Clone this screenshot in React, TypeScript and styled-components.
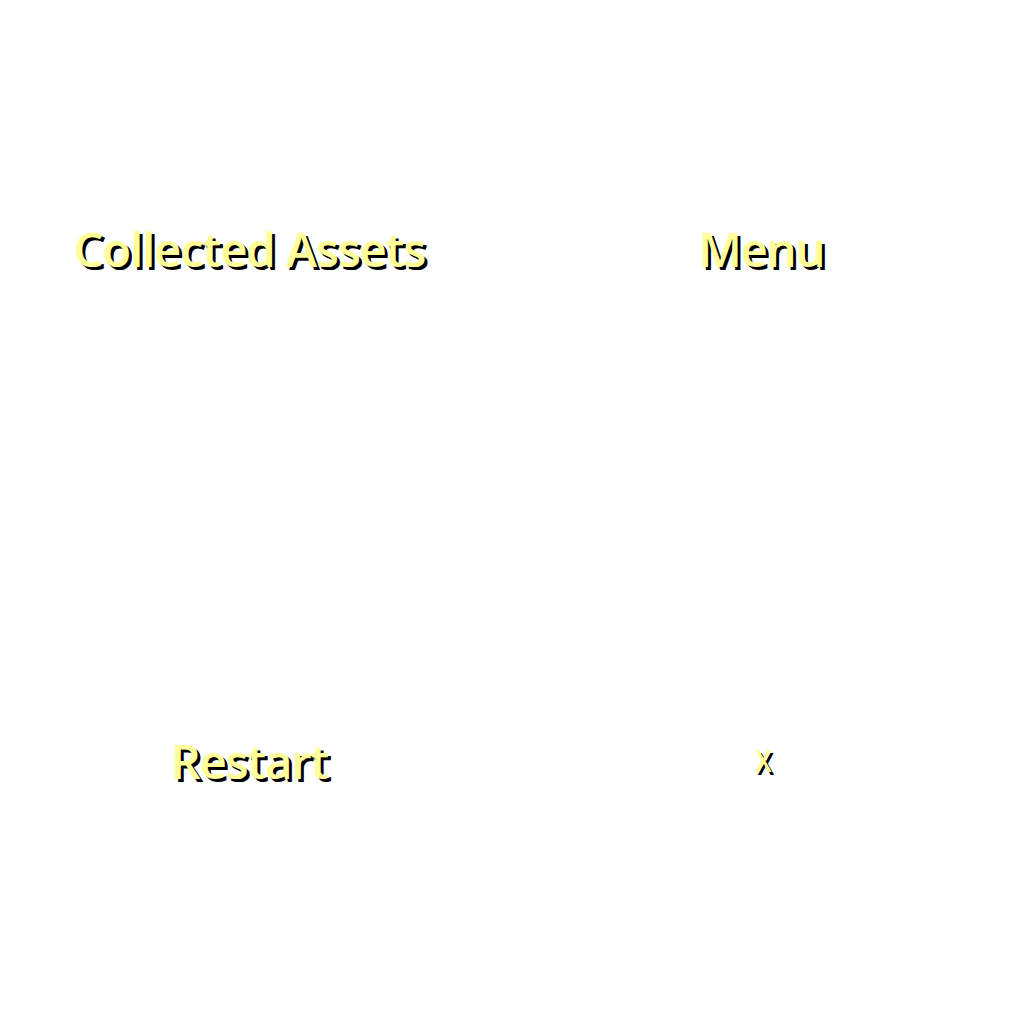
import React from "react";
import styled, { createGlobalStyle } from "styled-components";

const Global = createGlobalStyle`
  html, body { margin: 0; padding: 0; background: #fff; }
`;

const Screen = styled.div`
  width: 1024px;
  height: 1024px;
  display: grid;
  grid-template-columns: 1fr 1fr;
  grid-template-rows: 1fr 1fr;
  font-family: "Open Sans", sans-serif;
`;

const Cell = styled.div`
  display: flex;
  align-items: center;
  justify-content: center;
  padding: 0 13px 14px 0;
`;

const Label = styled.span<{ $size: number }>`
  color: #ffff99;
  font-size: ${(p) => p.$size}px;
  font-weight: 600;
  letter-spacing: -1px;
  text-shadow: 3px 3px 0 #000;
  line-height: 1;
`;

const CloseLabel = styled(Label)`
  letter-spacing: 0;
  transform: scaleX(0.85) translate(2px, -1px);
`;

export default function App() {
  return (
    <>
      <Global />
      <Screen>
        <Cell><Label $size={47}>Collected Assets</Label></Cell>
        <Cell><Label $size={47}>Menu</Label></Cell>
        <Cell><Label $size={47}>Restart</Label></Cell>
        <Cell><CloseLabel $size={31}>X</CloseLabel></Cell>
      </Screen>
    </>
  );
}
